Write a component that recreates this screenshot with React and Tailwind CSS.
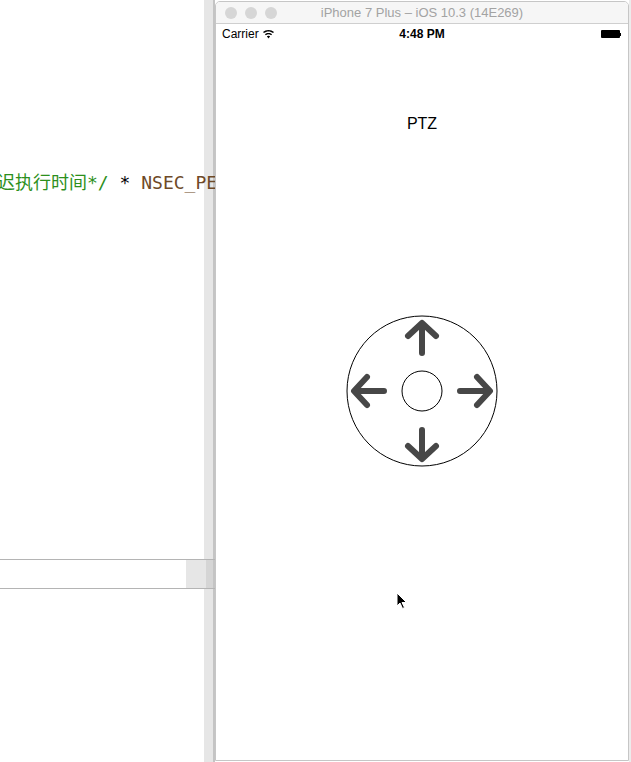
import React from 'react';

const Joystick = () => (
  <svg width="152" height="152" viewBox="0 0 152 152" fill="none">
    <circle cx="76" cy="76" r="75" stroke="#000" strokeWidth="1" />
    <circle cx="76" cy="76" r="20" stroke="#000" strokeWidth="1" />
    <g stroke="#474747" strokeWidth="6" strokeLinecap="round" strokeLinejoin="round">
      {/* up */}
      <path d="M76 38 V9 M62 21 L76 8 L90 21" />
      {/* down */}
      <path d="M76 115 V143 M62 131 L76 144 L90 131" />
      {/* left */}
      <path d="M38 76 H9 M21 62 L8 76 L21 90" />
      {/* right */}
      <path d="M114 76 H143 M131 62 L144 76 L131 90" />
    </g>
  </svg>
);

const Wifi = () => (
  <svg width="11" height="9" viewBox="0 0 11 9" fill="#000">
    <path d="M5.5 0 C3.3 0 1.5 0.8 0 2.1 L1 3.1 C2.2 2 3.8 1.4 5.5 1.4 C7.2 1.4 8.8 2 10 3.1 L11 2.1 C9.5 0.8 7.7 0 5.5 0 Z" />
    <path d="M5.5 2.9 C4.1 2.9 2.9 3.4 1.9 4.2 L2.9 5.2 C3.6 4.6 4.5 4.3 5.5 4.3 C6.5 4.3 7.4 4.6 8.1 5.2 L9.1 4.2 C8.1 3.4 6.9 2.9 5.5 2.9 Z" />
    <path d="M5.5 5.7 C4.9 5.7 4.3 5.9 3.8 6.3 L5.5 8.5 L7.2 6.3 C6.7 5.9 6.1 5.7 5.5 5.7 Z" />
  </svg>
);

const Cursor = () => (
  <svg width="12" height="18" viewBox="0 0 12 18">
    <path d="M1 1 L1 14 L4 11 L6.5 16.5 L8.5 15.5 L6 10.5 L10.5 10.5 Z" fill="#000" stroke="#fff" strokeWidth="1" strokeLinejoin="round" />
  </svg>
);

const Strip = () => (
  <>
    <div className="w-[9px] bg-[#e6e6e6]" />
    <div className="w-[2px] bg-[#c4c4c4]" />
  </>
);

export default function App() {
  return (
    <div className="relative flex h-[762px] w-[631px] overflow-hidden bg-white font-['Liberation_Sans',sans-serif]">
      {/* Xcode editor behind */}
      <div className="flex w-[215px] flex-col">
        <div className="h-[559px] overflow-hidden bg-[linear-gradient(to_right,#fff_204px,#e6e6e6_204px,#e6e6e6_213px,#c4c4c4_213px)] pt-[171px]">
          <div className="-ml-[3px] whitespace-nowrap text-[18px] leading-[24px] font-['DejaVu_Sans_Mono','Noto_Sans_CJK_SC',monospace]">
            <span className="text-[#2c8f1c]">迟执行时间*/</span>
            <span className="text-black"> * </span>
            <span className="text-[#6e4a28]">NSEC_PER_SEC</span>
          </div>
        </div>
        <div className="h-px bg-[#b4b4b4]" />
        <div className="flex h-[28px]">
          <div className="w-[186px] bg-white" />
          <div className="w-[20px] bg-[#e6e6e6]" />
          <div className="w-[7px] bg-[#d5d5d5]" />
          <div className="w-[2px] bg-[#c4c4c4]" />
        </div>
        <div className="h-px bg-[#b4b4b4]" />
        <div className="flex flex-1">
          <div className="w-[204px] bg-white" />
          <Strip />
        </div>
      </div>

      {/* Simulator window */}
      <div className="mt-px flex h-[760px] w-[414px] flex-col overflow-hidden rounded-t-[5px] border border-[#c6c6c6] bg-white">
        <div className="relative flex h-[22px] shrink-0 items-center justify-center border-b border-[#cfcfcf] bg-[#f6f6f6]">
          <div className="absolute left-[9px] top-[5px] flex gap-[8px]">
            <div className="h-[12px] w-[12px] rounded-full bg-[#d6d6d6]" />
            <div className="h-[12px] w-[12px] rounded-full bg-[#d6d6d6]" />
            <div className="h-[12px] w-[12px] rounded-full bg-[#d6d6d6]" />
          </div>
          <span className="text-[13px] text-[#a3a3a3]">iPhone 7 Plus – iOS 10.3 (14E269)</span>
        </div>

        <div className="relative flex h-[20px] shrink-0 items-center justify-center px-[6px]">
          <div className="absolute left-[6px] top-0 flex h-[20px] items-center gap-[4px]">
            <span className="text-[12px] text-black">Carrier</span>
            <Wifi />
          </div>
          <span className="text-[12px] font-semibold text-black">4:48 PM</span>
          <div className="absolute right-[7px] top-[6px] flex items-center">
            <div className="h-[8px] w-[19px] rounded-[1px] bg-black" />
            <div className="h-[3px] w-[1.5px] bg-black" />
          </div>
        </div>

        <div className="mt-[70px] text-center text-[16px] leading-[20px] text-black">PTZ</div>

        <div className="mt-[181px] flex justify-center">
          <Joystick />
        </div>
      </div>

      <div className="flex-1 bg-[#ececec]" />

      <div className="absolute left-[396px] top-[592px]">
        <Cursor />
      </div>
    </div>
  );
}
